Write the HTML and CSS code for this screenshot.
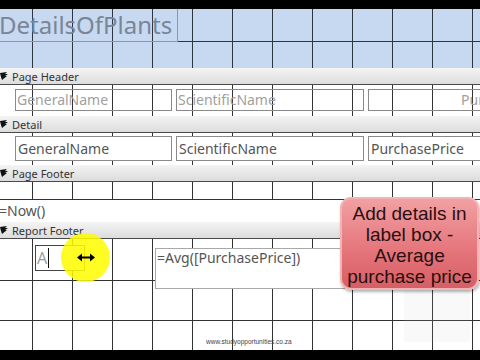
FILE: index.html
```html
<!DOCTYPE html>
<html>
<head>
<meta charset="utf-8">
<link rel="stylesheet" href="styles.css">
</head>
<body>
<div class="screen">
  <div class="blackbar"></div>
  <section class="sec rh">
    <div class="title">DetailsOfPlants</div>
  </section>
  <div class="bar"><svg class="ico" width="8" height="8" viewBox="0 0 8 8"><path d="M0 1 L7 0 L5 2 L8 2 L5 4 L7 4 L2 8 L1 5 Z" fill="#111"/></svg>Page Header</div>
  <section class="sec ph">
    <div class="lbl w1">GeneralName</div>
    <div class="lbl w2">ScientificName</div>
    <div class="lbl w3 right">PurchasePrice</div>
  </section>
  <div class="bar"><svg class="ico" width="8" height="8" viewBox="0 0 8 8"><path d="M0 1 L7 0 L5 2 L8 2 L5 4 L7 4 L2 8 L1 5 Z" fill="#111"/></svg>Detail</div>
  <section class="sec dt">
    <div class="tb w1">GeneralName</div>
    <div class="tb w2">ScientificName</div>
    <div class="tb w3">PurchasePrice</div>
  </section>
  <div class="bar"><svg class="ico" width="8" height="8" viewBox="0 0 8 8"><path d="M0 1 L7 0 L5 2 L8 2 L5 4 L7 4 L2 8 L1 5 Z" fill="#111"/></svg>Page Footer</div>
  <section class="sec pf">
    <div class="now">=Now()</div>
  </section>
  <div class="bar"><svg class="ico" width="8" height="8" viewBox="0 0 8 8"><path d="M0 1 L7 0 L5 2 L8 2 L5 4 L7 4 L2 8 L1 5 Z" fill="#111"/></svg>Report Footer</div>
  <section class="sec rf">
    <div class="alabel">A<span class="caret"></span></div>
    <div class="avg">=Avg([PurchasePrice])</div>
  </section>
  <div class="blackbar bottom"></div>

  <div class="watermark"></div>
  <div class="url">www.studyopportunities.co.za</div>
  <div class="highlight"></div>
  <svg class="cursor" width="18" height="9" viewBox="0 0 18 9"><path d="M0 4.5 L5 0.5 L5 3.5 L13 3.5 L13 0.5 L18 4.5 L13 8.5 L13 5.5 L5 5.5 L5 8.5 Z" fill="#000"/></svg>
  <div class="bubble">Add details in<br>label box -<br>Average<br>purchase price</div>
</div>
</body>
</html>
```
FILE: styles.css
```css
html, body {
  margin: 0;
  padding: 0;
  background: #fff;
}
.screen {
  position: relative;
  width: 480px;
  height: 360px;
  overflow: hidden;
  display: flex;
  flex-direction: column;
  font-family: "Noto Sans", "DejaVu Sans", sans-serif;
}
.blackbar {
  height: 9px;
  background: #000;
  flex: none;
}
.blackbar.bottom {
  height: 10px;
}
.sec {
  flex: none;
  position: relative;
  background-color: #fff;
  background-image: linear-gradient(to right, #333 1px, transparent 1px);
  background-size: 40px 100%;
  background-position: 32px 0;
}
.rh {
  height: 59px;
  background-color: #c7d9f1;
  background-image:
    linear-gradient(to bottom, transparent 32px, #2e3440 32px, #2e3440 33px, transparent 33px),
    linear-gradient(to right, #2e3440 1px, transparent 1px);
  background-size: 100% 100%, 40px 100%;
  background-position: 0 0, 32px 0;
  background-repeat: no-repeat, repeat;
}
.title {
  width: 177px;
  height: 32px;
  border-right: 1px solid #8a98ab;
  border-bottom: 1px solid #8a98ab;
  box-sizing: content-box;
  font-size: 24px;
  line-height: 31px;
  color: #7a8595;
  text-indent: -1px;
  white-space: nowrap;
  overflow: hidden;
}
.bar {
  flex: none;
  height: 16px;
  border-bottom: 1px solid #4a4a4a;
  background: linear-gradient(#f4f4f4, #dcdcdc);
  display: flex;
  align-items: center;
  font-size: 11px;
  color: #333;
  white-space: nowrap;
}
.ico {
  margin: 0 4px 0 0;
  flex: none;
}
.ph {
  height: 31px;
  display: flex;
  align-items: flex-start;
  padding: 4px 0 0 15px;
  box-sizing: border-box;
  gap: 4px;
}
.lbl, .tb {
  flex: none;
  box-sizing: border-box;
  border: 1px solid #8a8a8a;
  font-size: 14px;
  padding-left: 1px;
  white-space: nowrap;
  overflow: hidden;
}
.lbl {
  height: 22px;
  line-height: 20px;
  color: #a0a0a0;
}
.w1 { width: 157px; }
.w2 { width: 188px; }
.w3 { width: 190px; }
.right {
  text-align: right;
  padding-right: 3px;
}
.dt {
  height: 32px;
  display: flex;
  align-items: flex-start;
  padding: 3px 0 0 15px;
  box-sizing: border-box;
  gap: 4px;
}
.tb {
  height: 25px;
  line-height: 23px;
  background: #fff;
  color: #555;
  padding-left: 2px;
}
.pf {
  height: 40px;
  background-image:
    linear-gradient(to bottom, transparent 17px, #333 17px, #333 18px, transparent 18px),
    linear-gradient(to right, #333 1px, transparent 1px);
  background-size: 100% 100%, 40px 100%;
  background-position: 0 0, 32px 0;
  background-repeat: no-repeat, repeat;
  padding-top: 18px;
  box-sizing: border-box;
}
.now {
  height: 22px;
  background: #fff;
  font-size: 14px;
  line-height: 22px;
  color: #555;
  text-indent: -1px;
}
.rf {
  height: 111px;
  background-image:
    linear-gradient(to bottom, transparent 41px, #333 41px, #333 42px, transparent 42px, transparent 81px, #333 81px, #333 82px, transparent 82px),
    linear-gradient(to right, #333 1px, transparent 1px);
  background-size: 100% 100%, 40px 100%;
  background-position: 0 0, 32px 0;
  background-repeat: no-repeat, repeat;
  display: flex;
  align-items: flex-start;
}
.alabel {
  flex: none;
  margin: 6px 0 0 35px;
  width: 50px;
  height: 26px;
  box-sizing: border-box;
  border: 1px solid #444;
  background: #fff;
  font-size: 16px;
  line-height: 23px;
  color: #9d9d9d;
  padding-left: 1px;
  display: flex;
  align-items: center;
}
.caret {
  display: inline-block;
  width: 1px;
  height: 20px;
  background: #111;
  margin-left: 1px;
}
.avg {
  flex: none;
  margin: 9px 0 0 70px;
  width: 190px;
  height: 41px;
  box-sizing: border-box;
  border: 1px solid #a8a8a8;
  background: #fff;
  font-size: 14px;
  line-height: 18px;
  color: #555;
  padding: 0 0 0 1px;
  white-space: nowrap;
}
.watermark {
  position: absolute;
  left: 404px;
  top: 290px;
  width: 66px;
  height: 52px;
  background: rgba(200, 200, 200, 0.1);
}
.url {
  position: absolute;
  left: 206px;
  top: 338px;
  font-family: "Liberation Sans", Arial, sans-serif;
  font-size: 6.5px;
  color: #444;
  white-space: nowrap;
}
.highlight {
  position: absolute;
  left: 61px;
  top: 233px;
  width: 49px;
  height: 49px;
  border-radius: 50%;
  background: radial-gradient(circle, rgba(255, 255, 0, 0.88) 0, rgba(255, 250, 0, 0.85) 78%, rgba(255, 250, 0, 0.35) 100%);
}
.cursor {
  position: absolute;
  left: 77px;
  top: 253px;
}
.bubble {
  position: absolute;
  left: 340px;
  top: 197px;
  width: 139px;
  height: 93px;
  box-sizing: border-box;
  border: 2px solid #f2b3b4;
  border-radius: 11px;
  background: linear-gradient(#f2a0a3, #e4747a 60%, #d65e64);
  box-shadow: 1px 2px 3px rgba(0, 0, 0, 0.3);
  font-family: "Liberation Sans", Arial, sans-serif;
  font-size: 19px;
  line-height: 21px;
  color: #2a0f10;
  text-align: center;
  padding-top: 4px;
  white-space: nowrap;
}
```
